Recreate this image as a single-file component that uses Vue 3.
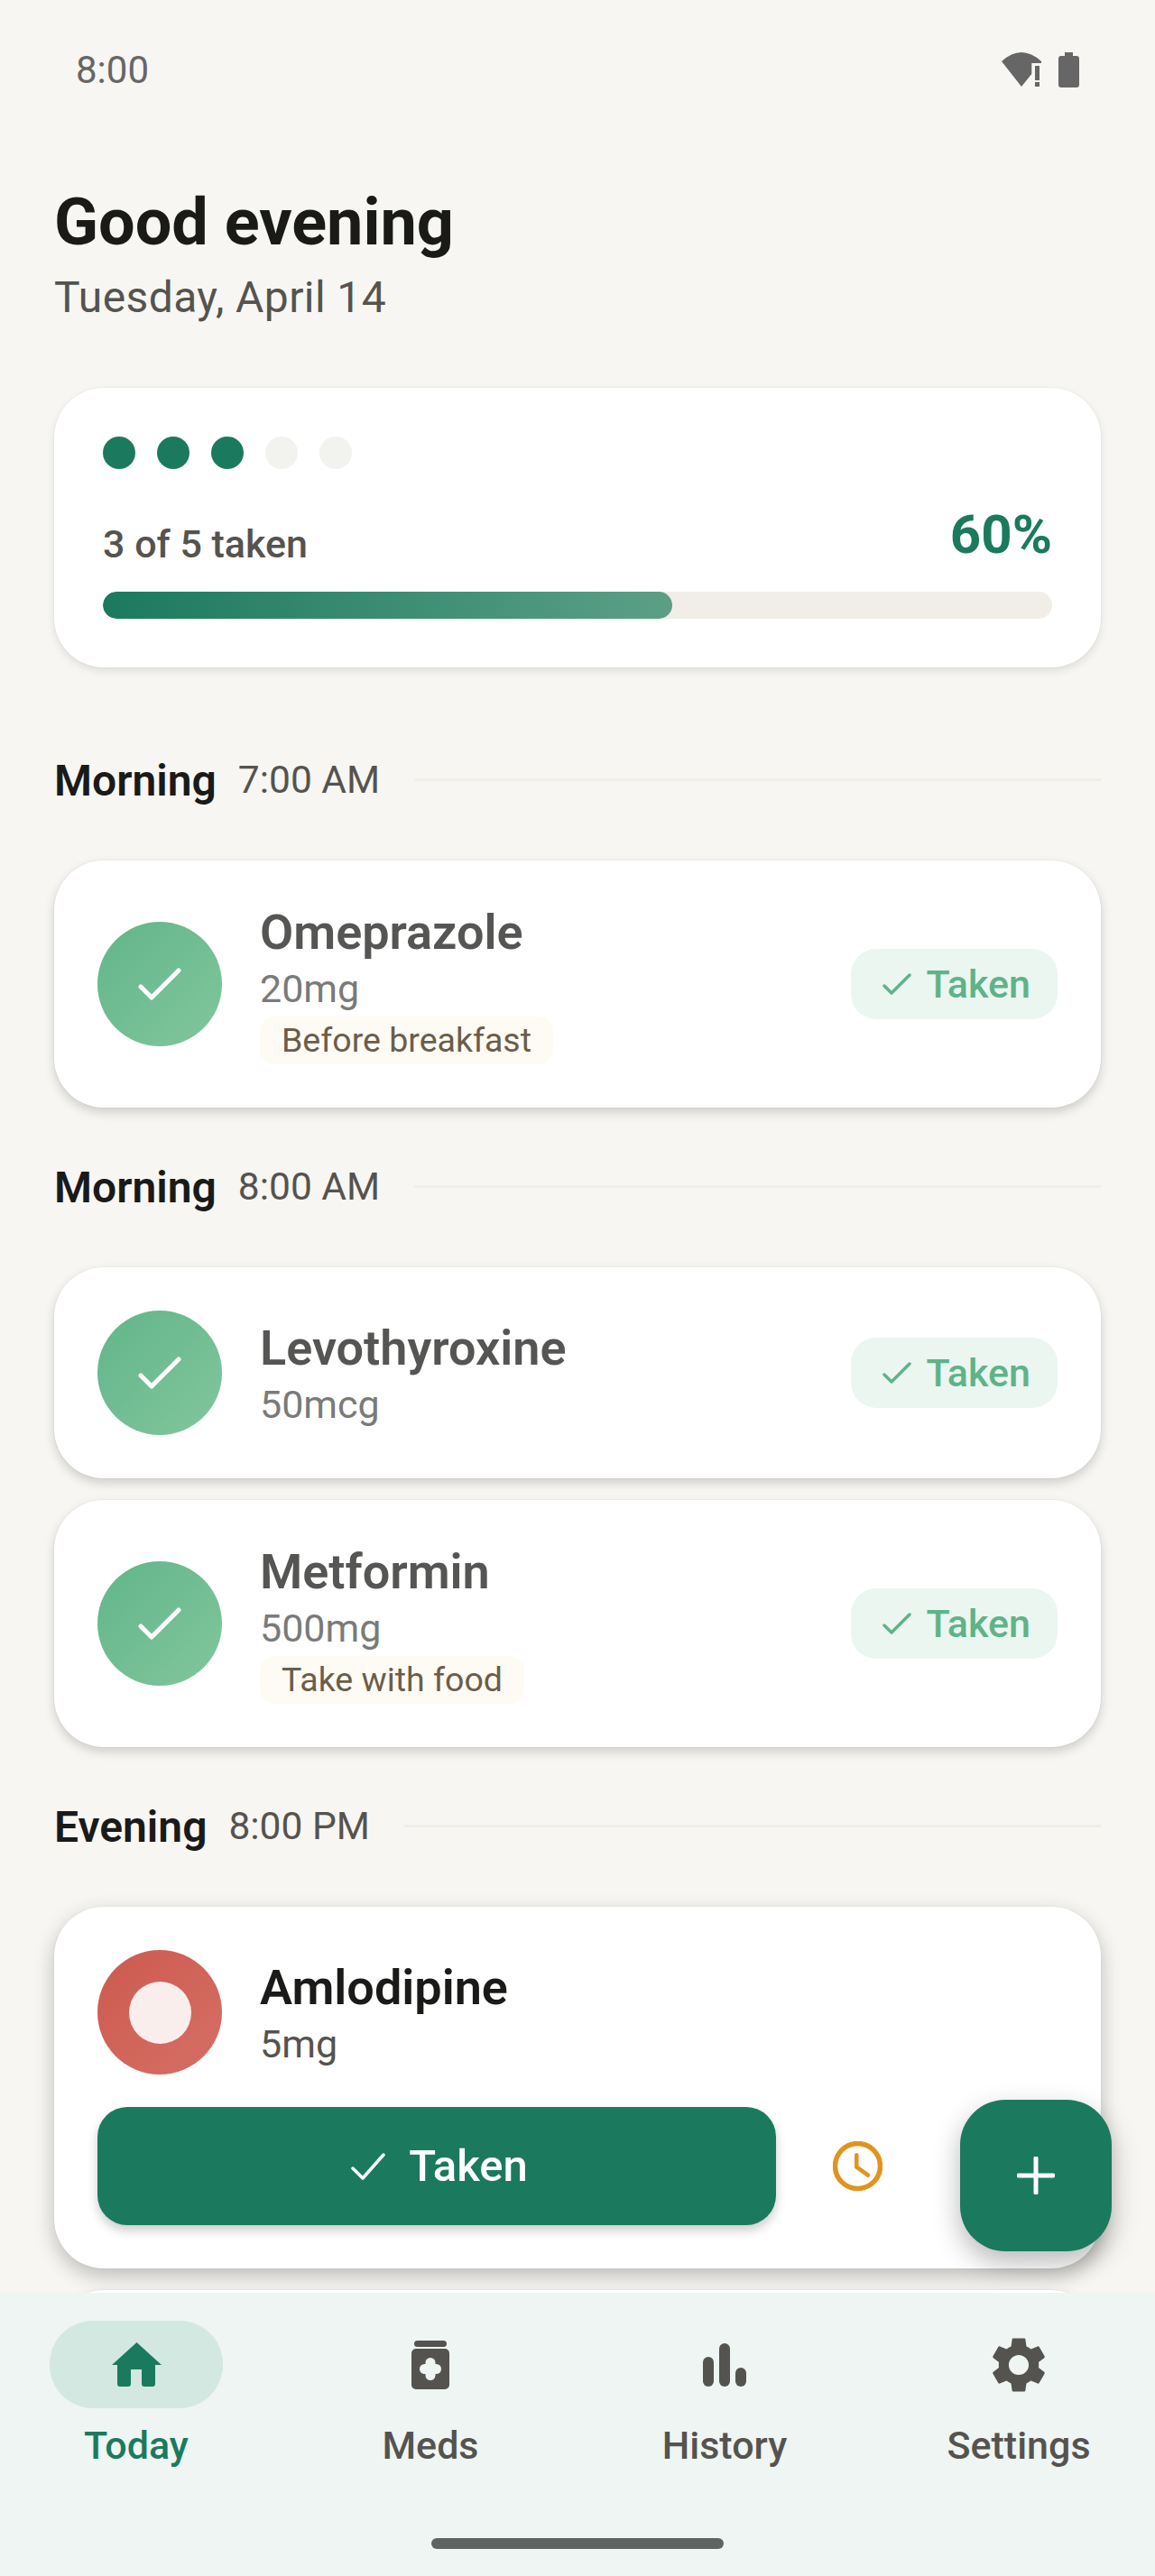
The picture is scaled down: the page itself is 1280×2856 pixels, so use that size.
<template>
  <div class="phone">
    <div class="status-bar">
      <span class="clock-text">8:00</span>
      <div class="status-icons">
        <svg width="48" height="42" viewBox="0 0 48 42">
          <path d="M2 12Q24-8 46 12V14H35.3V26L24 40z" fill="#666" />
          <rect x="39" y="17" width="5" height="16" fill="#666" />
          <rect x="39" y="35" width="5" height="5" fill="#666" />
        </svg>
        <svg width="23" height="39" viewBox="0 0 23 39">
          <path d="M7 0h9v4h4a3 3 0 0 1 3 3v29a3 3 0 0 1-3 3H3a3 3 0 0 1-3-3V7a3 3 0 0 1 3-3h4z" fill="#666" />
        </svg>
      </div>
    </div>

    <div class="content">
      <div class="greeting">
        <h1>Good evening</h1>
        <p>Tuesday, April 14</p>
      </div>

      <div class="card summary">
        <div class="dots">
          <span v-for="n in 5" :key="n" class="dot" :class="{ on: n <= taken }"></span>
        </div>
        <div class="summary-row">
          <span class="count">{{ taken }} of {{ total }} taken</span>
          <span class="percent">{{ percent }}%</span>
        </div>
        <div class="track">
          <div class="fill" :style="{ width: percent + '%' }"></div>
        </div>
      </div>

      <section v-for="group in groups" :key="group.time" class="group">
        <div class="group-head">
          <span class="group-name">{{ group.name }}</span>
          <span class="group-time">{{ group.time }}</span>
          <span class="group-line"></span>
        </div>

        <div class="group-cards">
          <div v-for="med in group.meds" :key="med.name" class="card med" :class="{ pending: !med.taken }">
            <div class="med-row">
              <div class="med-icon" :class="med.taken ? 'done' : 'due'">
                <svg v-if="med.taken" width="48" height="36" viewBox="0 0 48 36">
                  <path d="M3 21 15 33 45 3" fill="none" stroke="#fff" stroke-width="5" stroke-linecap="round" stroke-linejoin="round" />
                </svg>
                <span v-else class="due-core"></span>
              </div>
              <div class="med-info">
                <div class="med-name">{{ med.name }}</div>
                <div class="med-dose">{{ med.dose }}</div>
                <div v-if="med.note" class="med-note">{{ med.note }}</div>
              </div>
              <div v-if="med.taken" class="taken-pill">
                <svg width="32" height="24" viewBox="0 0 32 24">
                  <path d="M2 14 10 22 30 2" fill="none" stroke="#5fb388" stroke-width="3.5" stroke-linecap="round" stroke-linejoin="round" />
                </svg>
                <span>Taken</span>
              </div>
            </div>

            <div v-if="!med.taken" class="med-actions">
              <button class="take-btn">
                <svg width="38" height="30" viewBox="0 0 38 30">
                  <path d="M2 17 13 28 36 2" fill="none" stroke="#fff" stroke-width="3.5" stroke-linecap="round" stroke-linejoin="round" />
                </svg>
                Taken
              </button>
              <button class="snooze-btn">
                <svg width="55" height="55" viewBox="0 0 55 55">
                  <circle cx="27.5" cy="27.5" r="25" fill="none" stroke="#e0941f" stroke-width="5.5" />
                  <path d="M26.3 15.3V28.7L39 37.7" fill="none" stroke="#e0941f" stroke-width="4.5" stroke-linecap="round" stroke-linejoin="round" />
                </svg>
              </button>
            </div>
          </div>
          <div v-if="group.name === 'Evening'" class="card next-card"></div>
        </div>
      </section>
    </div>

    <button class="fab">
      <svg width="42" height="42" viewBox="0 0 42 42">
        <path d="M21 2V40M2 21H40" fill="none" stroke="#fff" stroke-width="5" stroke-linecap="round" />
      </svg>
    </button>

    <nav class="bottom-nav">
      <div class="nav-items">
        <div v-for="item in navItems" :key="item.label" class="nav-item" :class="{ active: item.active }">
          <div class="nav-icon">
            <svg v-if="item.label === 'Today'" width="55" height="51" viewBox="0 0 55 51">
              <path d="M27.5 1 55 26H48V47a3 3 0 0 1-3 3H36a3 3 0 0 1-3-3V31H21V47a3 3 0 0 1-3 3H9a3 3 0 0 1-3-3V26H0z" fill="#1b7a5e" />
            </svg>
            <svg v-else-if="item.label === 'Meds'" width="42" height="54" viewBox="0 0 42 54">
              <rect x="3" y="0" width="36" height="7" rx="3.5" fill="#55534f" />
              <rect x="0" y="9" width="42" height="45" rx="5" fill="#55534f" />
              <rect x="9" y="26" width="24" height="11" rx="5.5" fill="#eef5f2" />
              <rect x="15.5" y="19" width="11" height="25" rx="5.5" fill="#eef5f2" />
            </svg>
            <svg v-else-if="item.label === 'History'" width="48" height="48" viewBox="0 0 48 48">
              <rect x="0" y="15" width="12" height="33" rx="6" fill="#55534f" />
              <rect x="18" y="0" width="12" height="48" rx="6" fill="#55534f" />
              <rect x="36" y="27" width="12" height="21" rx="6" fill="#55534f" />
            </svg>
            <svg v-else width="74" height="74" viewBox="0 0 24 24">
              <path d="M19.14 12.94c.04-.3.06-.61.06-.94 0-.32-.02-.64-.07-.94l2.03-1.58c.18-.14.23-.41.12-.61l-1.92-3.32c-.12-.22-.37-.29-.59-.22l-2.39.96c-.5-.38-1.03-.7-1.62-.94l-.36-2.54c-.04-.24-.24-.41-.48-.41h-3.84c-.24 0-.43.17-.47.41l-.36 2.54c-.59.24-1.13.57-1.62.94l-2.39-.96c-.22-.08-.47 0-.59.22L2.74 8.87c-.12.21-.08.47.12.61l2.03 1.58c-.05.3-.09.63-.09.94s.02.64.07.94l-2.03 1.58c-.18.14-.23.41-.12.61l1.92 3.32c.12.22.37.29.59.22l2.39-.96c.5.38 1.03.7 1.62.94l.36 2.54c.05.24.24.41.48.41h3.84c.24 0 .44-.17.47-.41l.36-2.54c.59-.24 1.13-.56 1.62-.94l2.39.96c.22.08.47 0 .59-.22l1.92-3.32c.12-.22.07-.47-.12-.61l-2.01-1.58zM12 15.6c-1.98 0-3.6-1.62-3.6-3.6s1.62-3.6 3.6-3.6 3.6 1.62 3.6 3.6-1.62 3.6-3.6 3.6z" fill="#55534f" />
            </svg>
          </div>
          <span class="nav-label">{{ item.label }}</span>
        </div>
      </div>
      <div class="home-bar"></div>
    </nav>
  </div>
</template>

<script setup>
const taken = 3
const total = 5
const percent = 60

const groups = [
  {
    name: 'Morning',
    time: '7:00 AM',
    meds: [{ name: 'Omeprazole', dose: '20mg', note: 'Before breakfast', taken: true }]
  },
  {
    name: 'Morning',
    time: '8:00 AM',
    meds: [
      { name: 'Levothyroxine', dose: '50mcg', taken: true },
      { name: 'Metformin', dose: '500mg', note: 'Take with food', taken: true }
    ]
  },
  {
    name: 'Evening',
    time: '8:00 PM',
    meds: [{ name: 'Amlodipine', dose: '5mg', taken: false }]
  }
]

const navItems = [
  { label: 'Today', active: true },
  { label: 'Meds' },
  { label: 'History' },
  { label: 'Settings' }
]
</script>

<style>
html, body {
  margin: 0;
  background: #f7f6f2;
}
</style>

<style scoped>
.phone {
  position: relative;
  display: flex;
  flex-direction: column;
  width: 1280px;
  height: 2856px;
  overflow: hidden;
  background: #f7f6f2;
  font-family: Roboto, "Liberation Sans", sans-serif;
  color: #1a1a18;
}

.status-bar {
  display: flex;
  flex: none;
  justify-content: space-between;
  align-items: center;
  height: 154px;
  padding: 0 84px;
  box-sizing: border-box;
}

.clock-text {
  font-size: 42px;
  color: #666;
}

.status-icons {
  display: flex;
  align-items: center;
  gap: 17px;
}

.content {
  flex: 1;
  min-height: 0;
  overflow: hidden;
  padding: 0 60px;
}

.greeting {
  padding: 51px 0 72px;
}

.greeting h1 {
  margin: 0;
  font-size: 72px;
  line-height: 84px;
  font-weight: 700;
}

.greeting p {
  margin: 13px 0 0;
  font-size: 48px;
  line-height: 56px;
  letter-spacing: 0.4px;
  color: #55534f;
}

.card {
  background: #fff;
  border-radius: 55px;
  box-shadow: 0 0 0 1px rgba(0, 0, 0, 0.025), 0 5px 12px rgba(0, 0, 0, 0.17);
}

.summary {
  padding: 54px;
  margin-bottom: 36px;
  box-shadow: 0 0 0 1px rgba(0, 0, 0, 0.025), 0 4px 10px rgba(0, 0, 0, 0.1);
}

.dots {
  display: flex;
  gap: 24px;
}

.dot {
  width: 36px;
  height: 36px;
  border-radius: 50%;
  background: #f2f2ef;
}

.dot.on {
  background: #1b7a5e;
}

.summary-row {
  display: flex;
  justify-content: space-between;
  align-items: flex-end;
  margin-top: 38px;
}

.count {
  font-size: 43px;
  line-height: 50px;
  font-weight: 500;
  color: #55534f;
}

.percent {
  font-size: 60px;
  line-height: 70px;
  font-weight: 700;
  color: #1b7a5e;
}

.track {
  height: 30px;
  margin-top: 28px;
  border-radius: 15px;
  background: #f1eee8;
  overflow: hidden;
}

.fill {
  height: 100%;
  border-radius: 15px;
  background: linear-gradient(90deg, #1b7a5e, #5c9f87);
}

.group {
  padding-top: 59px;
}

.group:first-of-type {
  padding-top: 60px;
}

.group-head {
  display: flex;
  align-items: center;
  height: 56px;
  margin-bottom: 62px;
}

.group-name {
  position: relative;
  top: 1px;
  font-size: 48px;
  font-weight: 600;
  color: #1a1a18;
}

.group-time {
  margin-left: 24px;
  font-size: 42.5px;
  color: #55534f;
}

.group-line {
  flex: 1;
  height: 3px;
  margin-left: 38px;
  background: #f0eee9;
}

.group-cards {
  display: flex;
  flex-direction: column;
  gap: 24px;
}

.med {
  padding: 48px;
}

.med.pending {
  box-shadow: 0 0 0 1px rgba(0, 0, 0, 0.02), 0 8px 22px rgba(0, 0, 0, 0.24);
}

.med-row {
  display: flex;
  align-items: center;
}

.med-icon {
  display: flex;
  flex: none;
  justify-content: center;
  align-items: center;
  width: 138px;
  height: 138px;
  border-radius: 50%;
}

.med-icon.done {
  background: linear-gradient(135deg, #62b58a, #82c69d);
}

.med-icon.due {
  background: linear-gradient(135deg, #cc5a4e, #d66f66);
}

.due-core {
  width: 69px;
  height: 69px;
  border-radius: 50%;
  background: #faeeec;
}

.med-info {
  flex: 1;
  margin-left: 42px;
}

.med-name {
  font-size: 54px;
  line-height: 64px;
  font-weight: 600;
  color: #555553;
}

.med-dose {
  margin-top: 6px;
  font-size: 43px;
  line-height: 48px;
  color: #7a7a78;
}

.pending .med-name {
  color: #1a1a18;
}

.pending .med-dose {
  color: #55534f;
}

.med-note {
  width: fit-content;
  margin-top: 7px;
  padding: 0 24px;
  font-size: 37.5px;
  line-height: 53px;
  border-radius: 16px;
  color: #6b5d4a;
  background: #fefbf4;
}

.taken-pill {
  display: flex;
  flex: none;
  align-items: center;
  gap: 16px;
  height: 78px;
  padding: 0 30px 0 35px;
  border-radius: 28px;
  font-size: 43px;
  font-weight: 500;
  color: #5fb388;
  background: #ebf6f0;
}

.med-actions {
  display: flex;
  align-items: center;
  gap: 24px;
  margin-top: 36px;
}

.take-btn {
  display: flex;
  justify-content: center;
  align-items: center;
  gap: 26px;
  width: 752px;
  height: 131px;
  padding: 0 0 0 6px;
  border: none;
  border-radius: 33px;
  font-family: inherit;
  font-size: 49px;
  font-weight: 500;
  color: #fff;
  background: #1b7a5e;
  box-shadow: 0 6px 12px rgba(0, 0, 0, 0.2);
}

.snooze-btn {
  display: flex;
  justify-content: center;
  align-items: center;
  width: 132px;
  height: 131px;
  padding: 0;
  border: none;
  background: none;
}

.next-card {
  height: 200px;
}

.fab {
  position: absolute;
  top: 2328px;
  left: 1064px;
  display: flex;
  justify-content: center;
  align-items: center;
  width: 168px;
  height: 168px;
  padding: 0;
  border: none;
  border-radius: 50px;
  background: #1b7a5e;
  box-shadow: 0 12px 30px rgba(0, 0, 0, 0.28);
}

.bottom-nav {
  display: flex;
  flex: none;
  flex-direction: column;
  height: 314px;
  box-sizing: border-box;
  padding: 31px 55px 30px;
  background: #eef5f2;
}

.nav-items {
  display: flex;
  justify-content: space-between;
}

.nav-item {
  display: flex;
  flex-direction: column;
  align-items: center;
  width: 192px;
  color: #55534f;
}

.nav-icon {
  display: flex;
  justify-content: center;
  align-items: center;
  width: 192px;
  height: 97px;
  border-radius: 48px;
}

.nav-item.active .nav-icon {
  background: #d3e8e1;
}

.nav-label {
  margin-top: 15px;
  font-size: 43px;
  line-height: 52px;
  font-weight: 500;
  white-space: nowrap;
}

.nav-item.active .nav-label {
  color: #1b7a5e;
}

.home-bar {
  width: 324px;
  height: 12px;
  margin: auto auto 0;
  border-radius: 6px;
  background: #5f6361;
}
</style>
